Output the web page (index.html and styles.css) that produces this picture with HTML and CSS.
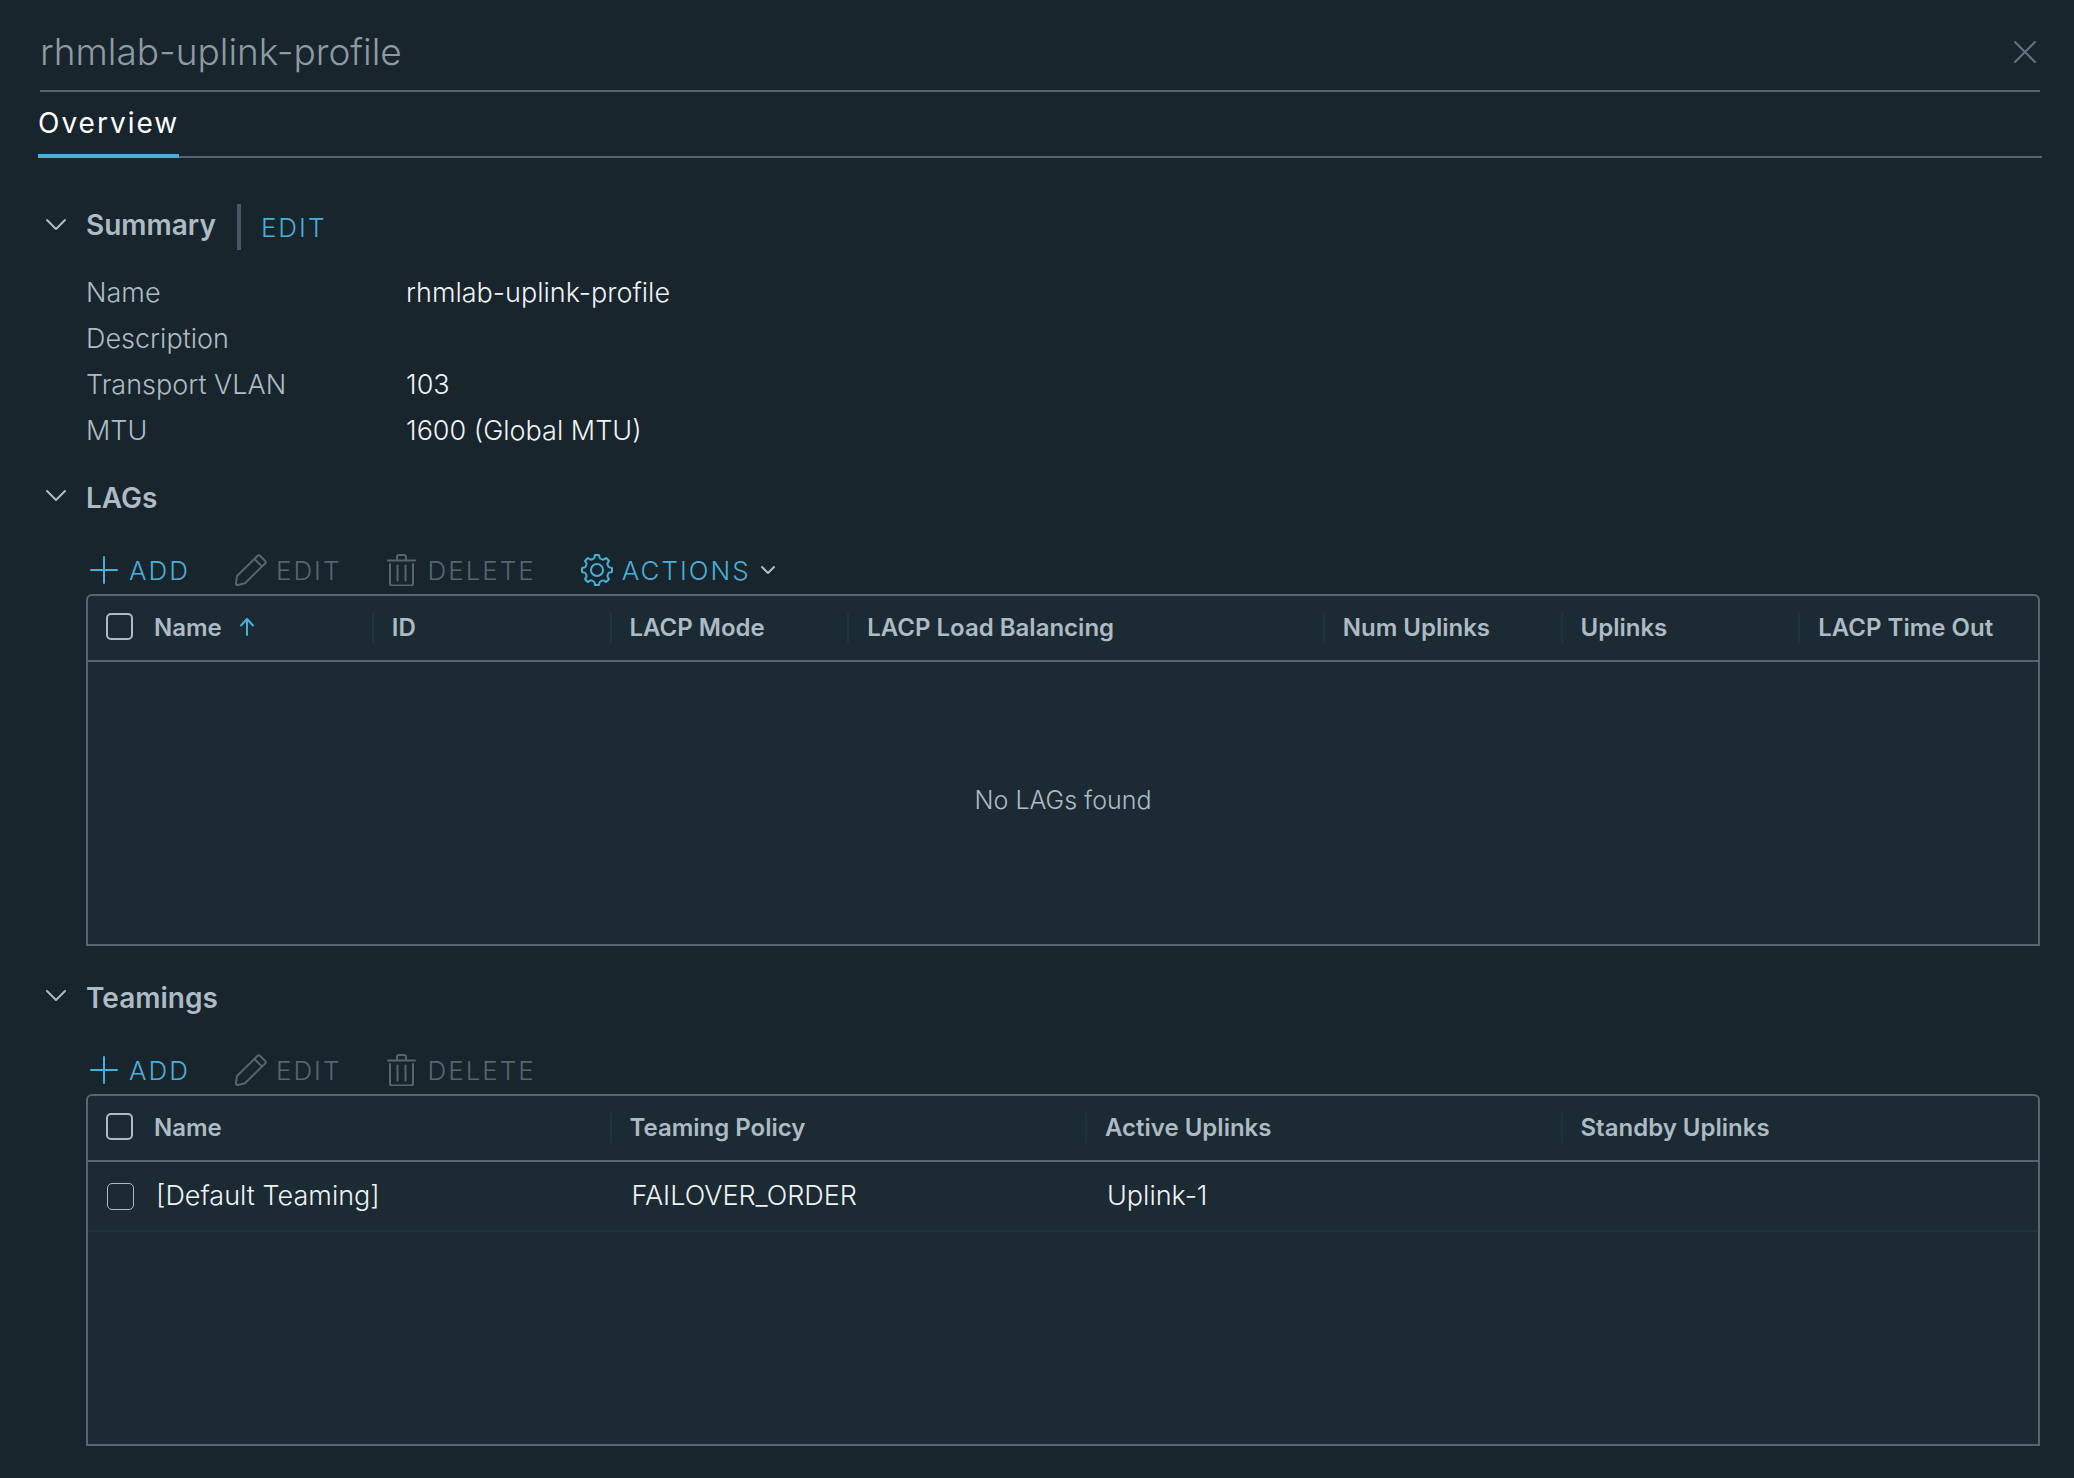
FILE: index.html
```html
<!DOCTYPE html>
<html lang="en">

<head>
    <meta charset="UTF-8">
    <meta name="viewport" content="width=device-width, initial-scale=1.0">
    <title>rhmlab-uplink-profile</title>
    <link rel="stylesheet" href="styles.css">
</head>

<body>
    <!-- shared icons -->
    <svg class="sprite" aria-hidden="true">
        <symbol id="down" viewBox="0 0 22 14"><path d="M2 2l9 9 9-9" /></symbol>
        <symbol id="close" viewBox="0 0 22 22"><path d="M1 1l20 20M21 1L1 21" /></symbol>
        <symbol id="plus" viewBox="0 0 32 32"><path d="M16 3v26M3 16h26" /></symbol>
        <symbol id="pencil" viewBox="0 0 32 32">
            <path d="M2 22L22.600 1.800q1.200-1.200 2.400 0L30.200 7q1.200 1.200 0 2.400L10 29.200 2.800 31q-2 .3-1.800-1.600zM19.500 5l7.600 7.600" />
        </symbol>
        <symbol id="trash" viewBox="0 0 32 32">
            <path d="M2 6.500h27M11 6V3q0-2 2-2h5q2 0 2 2v3M4 10v19.500q0 2 2 2h19q2 0 2-2V10M11.500 11.500v15M19.500 11.500v15" />
        </symbol>
        <symbol id="gear" viewBox="0 0 32 32">
            <g id="tooth"><path d="M16 1H17.500Q18.200 1 18.200 1.600L18.600 3.600Q18.800 4.600 20.500 5.100Q22.100 6 22.900 5.400L24.600 4.300Q25.100 3.800 25.600 4.300L26.600 5.400" /></g>
            <use href="#tooth" transform="rotate(45 16 16)" />
            <use href="#tooth" transform="rotate(90 16 16)" />
            <use href="#tooth" transform="rotate(135 16 16)" />
            <use href="#tooth" transform="rotate(180 16 16)" />
            <use href="#tooth" transform="rotate(225 16 16)" />
            <use href="#tooth" transform="rotate(270 16 16)" />
            <use href="#tooth" transform="rotate(315 16 16)" />
            <circle cx="16" cy="16" r="6" />
        </symbol>
        <symbol id="caret" viewBox="0 0 14 10"><path d="M1 2l6 6 6-6" /></symbol>
        <symbol id="sort" viewBox="0 0 14 18"><path d="M7 17V1M1 7.500L7 1l6 6.500" /></symbol>
    </svg>

    <main class="panel">
        <header class="header">
            <h1>rhmlab-uplink-profile</h1>
            <button class="close" type="button" aria-label="Close"><svg><use href="#close" /></svg></button>
        </header>
        <nav class="tabs">
            <button class="tab active" type="button">Overview</button>
        </nav>

        <section class="section summary">
            <div class="section-head">
                <h2><button class="toggle" type="button"><svg><use href="#down" /></svg>Summary</button></h2>
                <button class="btn edit" type="button">EDIT</button>
            </div>
            <dl>
                <dt>Name</dt>
                <dd>rhmlab-uplink-profile</dd>
                <dt>Description</dt>
                <dd></dd>
                <dt>Transport VLAN</dt>
                <dd>103</dd>
                <dt>MTU</dt>
                <dd>1600 (Global MTU)</dd>
            </dl>
        </section>

        <section class="section">
            <div class="section-head">
                <h2><button class="toggle" type="button"><svg><use href="#down" /></svg>LAGs</button></h2>
            </div>
            <div class="toolbar">
                <button class="btn" type="button"><svg><use href="#plus" /></svg>ADD</button>
                <button class="btn" type="button" disabled><svg><use href="#pencil" /></svg>EDIT</button>
                <button class="btn" type="button" disabled><svg><use href="#trash" /></svg>DELETE</button>
                <button class="btn" type="button"><svg><use href="#gear" /></svg>ACTIONS<svg class="caret"><use href="#caret" /></svg></button>
            </div>
            <div class="datagrid">
                <table>
                    <colgroup>
                        <col class="check-col">
                        <col span="8">
                    </colgroup>
                    <thead>
                        <tr>
                            <th class="check"><input type="checkbox" aria-label="Select all LAGs"></th>
                            <th><div>Name<svg class="sort"><use href="#sort" /></svg></div></th>
                            <th><div>ID</div></th>
                            <th><div>LACP Mode</div></th>
                            <th colspan="2"><div>LACP Load Balancing</div></th>
                            <th><div>Num Uplinks</div></th>
                            <th><div>Uplinks</div></th>
                            <th><div>LACP Time Out</div></th>
                        </tr>
                    </thead>
                    <tbody>
                        <tr>
                            <td class="empty" colspan="9">No LAGs found</td>
                        </tr>
                    </tbody>
                </table>
            </div>
        </section>

        <section class="section">
            <div class="section-head">
                <h2><button class="toggle" type="button"><svg><use href="#down" /></svg>Teamings</button></h2>
            </div>
            <div class="toolbar">
                <button class="btn" type="button"><svg><use href="#plus" /></svg>ADD</button>
                <button class="btn" type="button" disabled><svg><use href="#pencil" /></svg>EDIT</button>
                <button class="btn" type="button" disabled><svg><use href="#trash" /></svg>DELETE</button>
            </div>
            <div class="datagrid">
                <table>
                    <colgroup>
                        <col class="check-col">
                        <col span="4">
                    </colgroup>
                    <thead>
                        <tr>
                            <th class="check"><input type="checkbox" aria-label="Select all teamings"></th>
                            <th><div>Name</div></th>
                            <th><div>Teaming Policy</div></th>
                            <th><div>Active Uplinks</div></th>
                            <th><div>Standby Uplinks</div></th>
                        </tr>
                    </thead>
                    <tbody>
                        <tr>
                            <td class="check"><input type="checkbox" aria-label="Select [Default Teaming]"></td>
                            <td>[Default Teaming]</td>
                            <td>FAILOVER_ORDER</td>
                            <td>Uplink-1</td>
                            <td></td>
                        </tr>
                    </tbody>
                </table>
            </div>
        </section>
    </main>
</body>

</html>
```
FILE: styles.css
```css
* {
    box-sizing: border-box;
}

body {
    margin: 0;
    background-color: #18252c;
    color: #adbbc4;
    font-family: Inter, "Liberation Sans", sans-serif;
    font-size: 27px;
    font-weight: 300;
}

h1,
h2,
dl,
dd {
    margin: 0;
}

button {
    padding: 0;
    border: 0;
    background: none;
    color: inherit;
    font: inherit;
    cursor: pointer;
}

svg {
    flex: none;
    fill: none;
    stroke: currentColor;
    stroke-width: 2px;
    stroke-linecap: round;
    stroke-linejoin: round;
}

.sprite {
    display: none;
}

.panel {
    padding: 0 32px 32px 38px;
}

.header {
    display: flex;
    justify-content: space-between;
    align-items: center;
    margin: 0 2px;
    padding: 31px 4px 17px 0;
    border-bottom: 2px solid #566571;
}

.header h1 {
    color: #8d9aa2;
    font-size: 37px;
    font-weight: 300;
    line-height: 42px;
}

.close svg {
    display: block;
    width: 22px;
    height: 22px;
    color: #64727f;
}

.tabs {
    display: flex;
    height: 66px;
    border-bottom: 2px solid #566571;
}

.tab {
    height: 66px;
    border-bottom: 4px solid #49afd9;
    color: #fff;
    font-size: 28px;
    font-weight: 400;
    letter-spacing: 2px;
}

.summary {
    padding-top: 25px;
}

.section {
    margin-top: 21px;
}

.section-head {
    display: flex;
    height: 46px;
}

.section-head h2 {
    display: flex;
    font-size: 28px;
    font-weight: 600;
}

.toggle {
    display: flex;
    align-items: center;
    padding-left: 7px;
}

.toggle svg {
    width: 22px;
    height: 14px;
    margin: 0 19px 4px 0;
}

.summary .toggle {
    padding-bottom: 4px;
}

.summary .toggle svg {
    margin-bottom: 0;
}

.btn {
    display: flex;
    align-items: center;
    color: #49afd9;
    font-size: 26px;
    font-weight: 300;
    letter-spacing: 2px;
}

.btn:disabled {
    color: #566571;
    cursor: default;
}

.edit {
    margin-left: 21px;
    padding-left: 20px;
    border-left: 4px solid #495865;
}

dl {
    display: grid;
    grid-template-columns: 320px 1fr;
    margin: 20px 0 0 48px;
    line-height: 46px;
}

dd {
    min-height: 46px;
    color: #eef2f4;
}

.toolbar {
    display: flex;
    gap: 45px;
    height: 44px;
    margin: 27px 0 2px 50px;
}

.toolbar svg {
    width: 32px;
    height: 32px;
    margin-right: 9px;
}

.toolbar .caret {
    width: 14px;
    height: 10px;
    margin: 0 0 0 10px;
    color: #adbbc4;
}

.datagrid {
    min-height: 352px;
    margin: 0 2px 29px 48px;
    border: 2px solid #566571;
    border-radius: 6px 6px 0 0;
    background-color: #1c2a33;
}

table {
    width: 100%;
    table-layout: fixed;
    border-spacing: 0;
}

.check-col {
    width: 48px;
}

th,
td {
    height: 66px;
    padding: 0;
    text-align: left;
}

th {
    border-bottom: 2px solid #566571;
    font-size: 24px;
    font-weight: 600;
}

th div {
    padding-left: 18px;
    border-right: 2px solid #21333b;
    line-height: 30px;
    white-space: nowrap;
}

th:last-child div {
    border-right: 0;
}

td {
    height: 70px;
    padding: 0 0 2px 20px;
    border-bottom: 2px solid #21333b;
    color: #eef2f4;
}

.check {
    padding: 0 0 3px 18px;
}

.check input {
    display: block;
    width: 27px;
    height: 27px;
    margin: 0;
    border: 2px solid #adbbc4;
    border-radius: 5px;
    appearance: none;
}

td.check {
    padding: 0 0 0 19px;
}

td.check input {
    border-width: 1px;
}

.sort {
    width: 14px;
    height: 18px;
    margin-left: 18px;
    color: #49afd9;
}

.empty {
    height: 282px;
    padding: 0 0 6px;
    border-bottom: 0;
    color: #adbbc4;
    font-size: 25px;
    text-align: center;
}
```
